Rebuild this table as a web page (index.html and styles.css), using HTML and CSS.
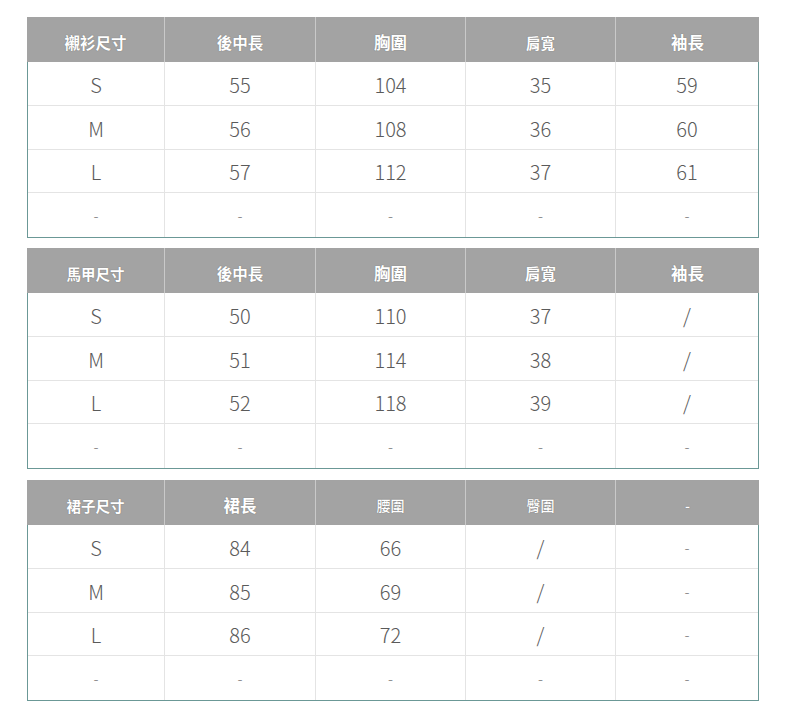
FILE: index.html
```html
<!DOCTYPE html>
<html lang="zh-Hant">
<head>
<meta charset="utf-8">
<title>尺寸表</title>
<link rel="stylesheet" href="styles.css">
</head>
<body>
<main class="page">
  <section class="sheet">
    <div class="head">
      <div class="hc">襯衫尺寸</div>
      <div class="hc">後中長</div>
      <div class="hc lg">胸圍</div>
      <div class="hc sm">肩寬</div>
      <div class="hc lg">袖長</div>
    </div>
    <div class="body">
      <div class="c">S</div><div class="c">55</div><div class="c">104</div><div class="c">35</div><div class="c">59</div>
      <div class="c">M</div><div class="c">56</div><div class="c">108</div><div class="c">36</div><div class="c">60</div>
      <div class="c">L</div><div class="c">57</div><div class="c">112</div><div class="c">37</div><div class="c">61</div>
      <div class="c d">-</div><div class="c d">-</div><div class="c d">-</div><div class="c d">-</div><div class="c d">-</div>
    </div>
  </section>

  <section class="sheet">
    <div class="head">
      <div class="hc sm">馬甲尺寸</div>
      <div class="hc">後中長</div>
      <div class="hc lg">胸圍</div>
      <div class="hc">肩寬</div>
      <div class="hc lg">袖長</div>
    </div>
    <div class="body">
      <div class="c">S</div><div class="c">50</div><div class="c">110</div><div class="c">37</div><div class="c">/</div>
      <div class="c">M</div><div class="c">51</div><div class="c">114</div><div class="c">38</div><div class="c">/</div>
      <div class="c">L</div><div class="c">52</div><div class="c">118</div><div class="c">39</div><div class="c">/</div>
      <div class="c d">-</div><div class="c d">-</div><div class="c d">-</div><div class="c d">-</div><div class="c d">-</div>
    </div>
  </section>

  <section class="sheet last">
    <div class="head">
      <div class="hc sm">裙子尺寸</div>
      <div class="hc lg">裙長</div>
      <div class="hc xs">腰圍</div>
      <div class="hc xs">臀圍</div>
      <div class="hc xs">-</div>
    </div>
    <div class="body">
      <div class="c">S</div><div class="c">84</div><div class="c">66</div><div class="c">/</div><div class="c d">-</div>
      <div class="c">M</div><div class="c">85</div><div class="c">69</div><div class="c">/</div><div class="c d">-</div>
      <div class="c">L</div><div class="c">86</div><div class="c">72</div><div class="c">/</div><div class="c d">-</div>
      <div class="c d">-</div><div class="c d">-</div><div class="c d">-</div><div class="c d">-</div><div class="c d">-</div>
    </div>
  </section>
</main>
</body>
</html>
```

FILE: styles.css
```css
html, body {
  margin: 0;
  padding: 0;
  background: #ffffff;
}

body {
  font-family: "Noto Sans CJK TC", "Noto Sans", sans-serif;
}

.page {
  display: flex;
  flex-direction: column;
  gap: 10px;
  padding: 17px 0 0 27px;
  width: 732px;
}

.sheet {
  display: flex;
  flex-direction: column;
  width: 732px;
}

.sheet.last {
  margin-top: 1px;
}

.head {
  display: grid;
  grid-template-columns: 138px 151px 150px 150px 143px;
  height: 45px;
  background: #a3a3a3;
}

.hc {
  display: flex;
  align-items: center;
  justify-content: center;
  padding-top: 5px;
  box-sizing: border-box;
  color: #ffffff;
  font-size: 15.5px;
  font-weight: 700;
  text-shadow: 0 0 1px rgba(60, 60, 60, 0.6);
  border-right: 1px solid #c9c9c9;
}

.hc:last-child {
  border-right: none;
}

.hc.lg { font-size: 16.5px; }
.hc.sm { font-size: 14.5px; }
.hc.xs { font-size: 14px; font-weight: 500; }

.body {
  display: grid;
  grid-template-columns: 137px 151px 150px 150px 142px;
  grid-template-rows: 44px 44px 43px 44px;
  border: 1px solid #6b9896;
  border-top: none;
}

.c {
  display: flex;
  align-items: center;
  justify-content: center;
  padding-top: 1px;
  box-sizing: border-box;
  color: #5a5a5a;
  font-size: 20px;
  font-weight: 300;
  border-right: 1px solid #e4e4e4;
  border-bottom: 1px solid #e4e4e4;
}

.c:nth-child(5n) {
  border-right: none;
}

.c:nth-last-child(-n+5) {
  border-bottom: none;
}

.c.d {
  font-size: 15px;
  color: #777777;
}
```
